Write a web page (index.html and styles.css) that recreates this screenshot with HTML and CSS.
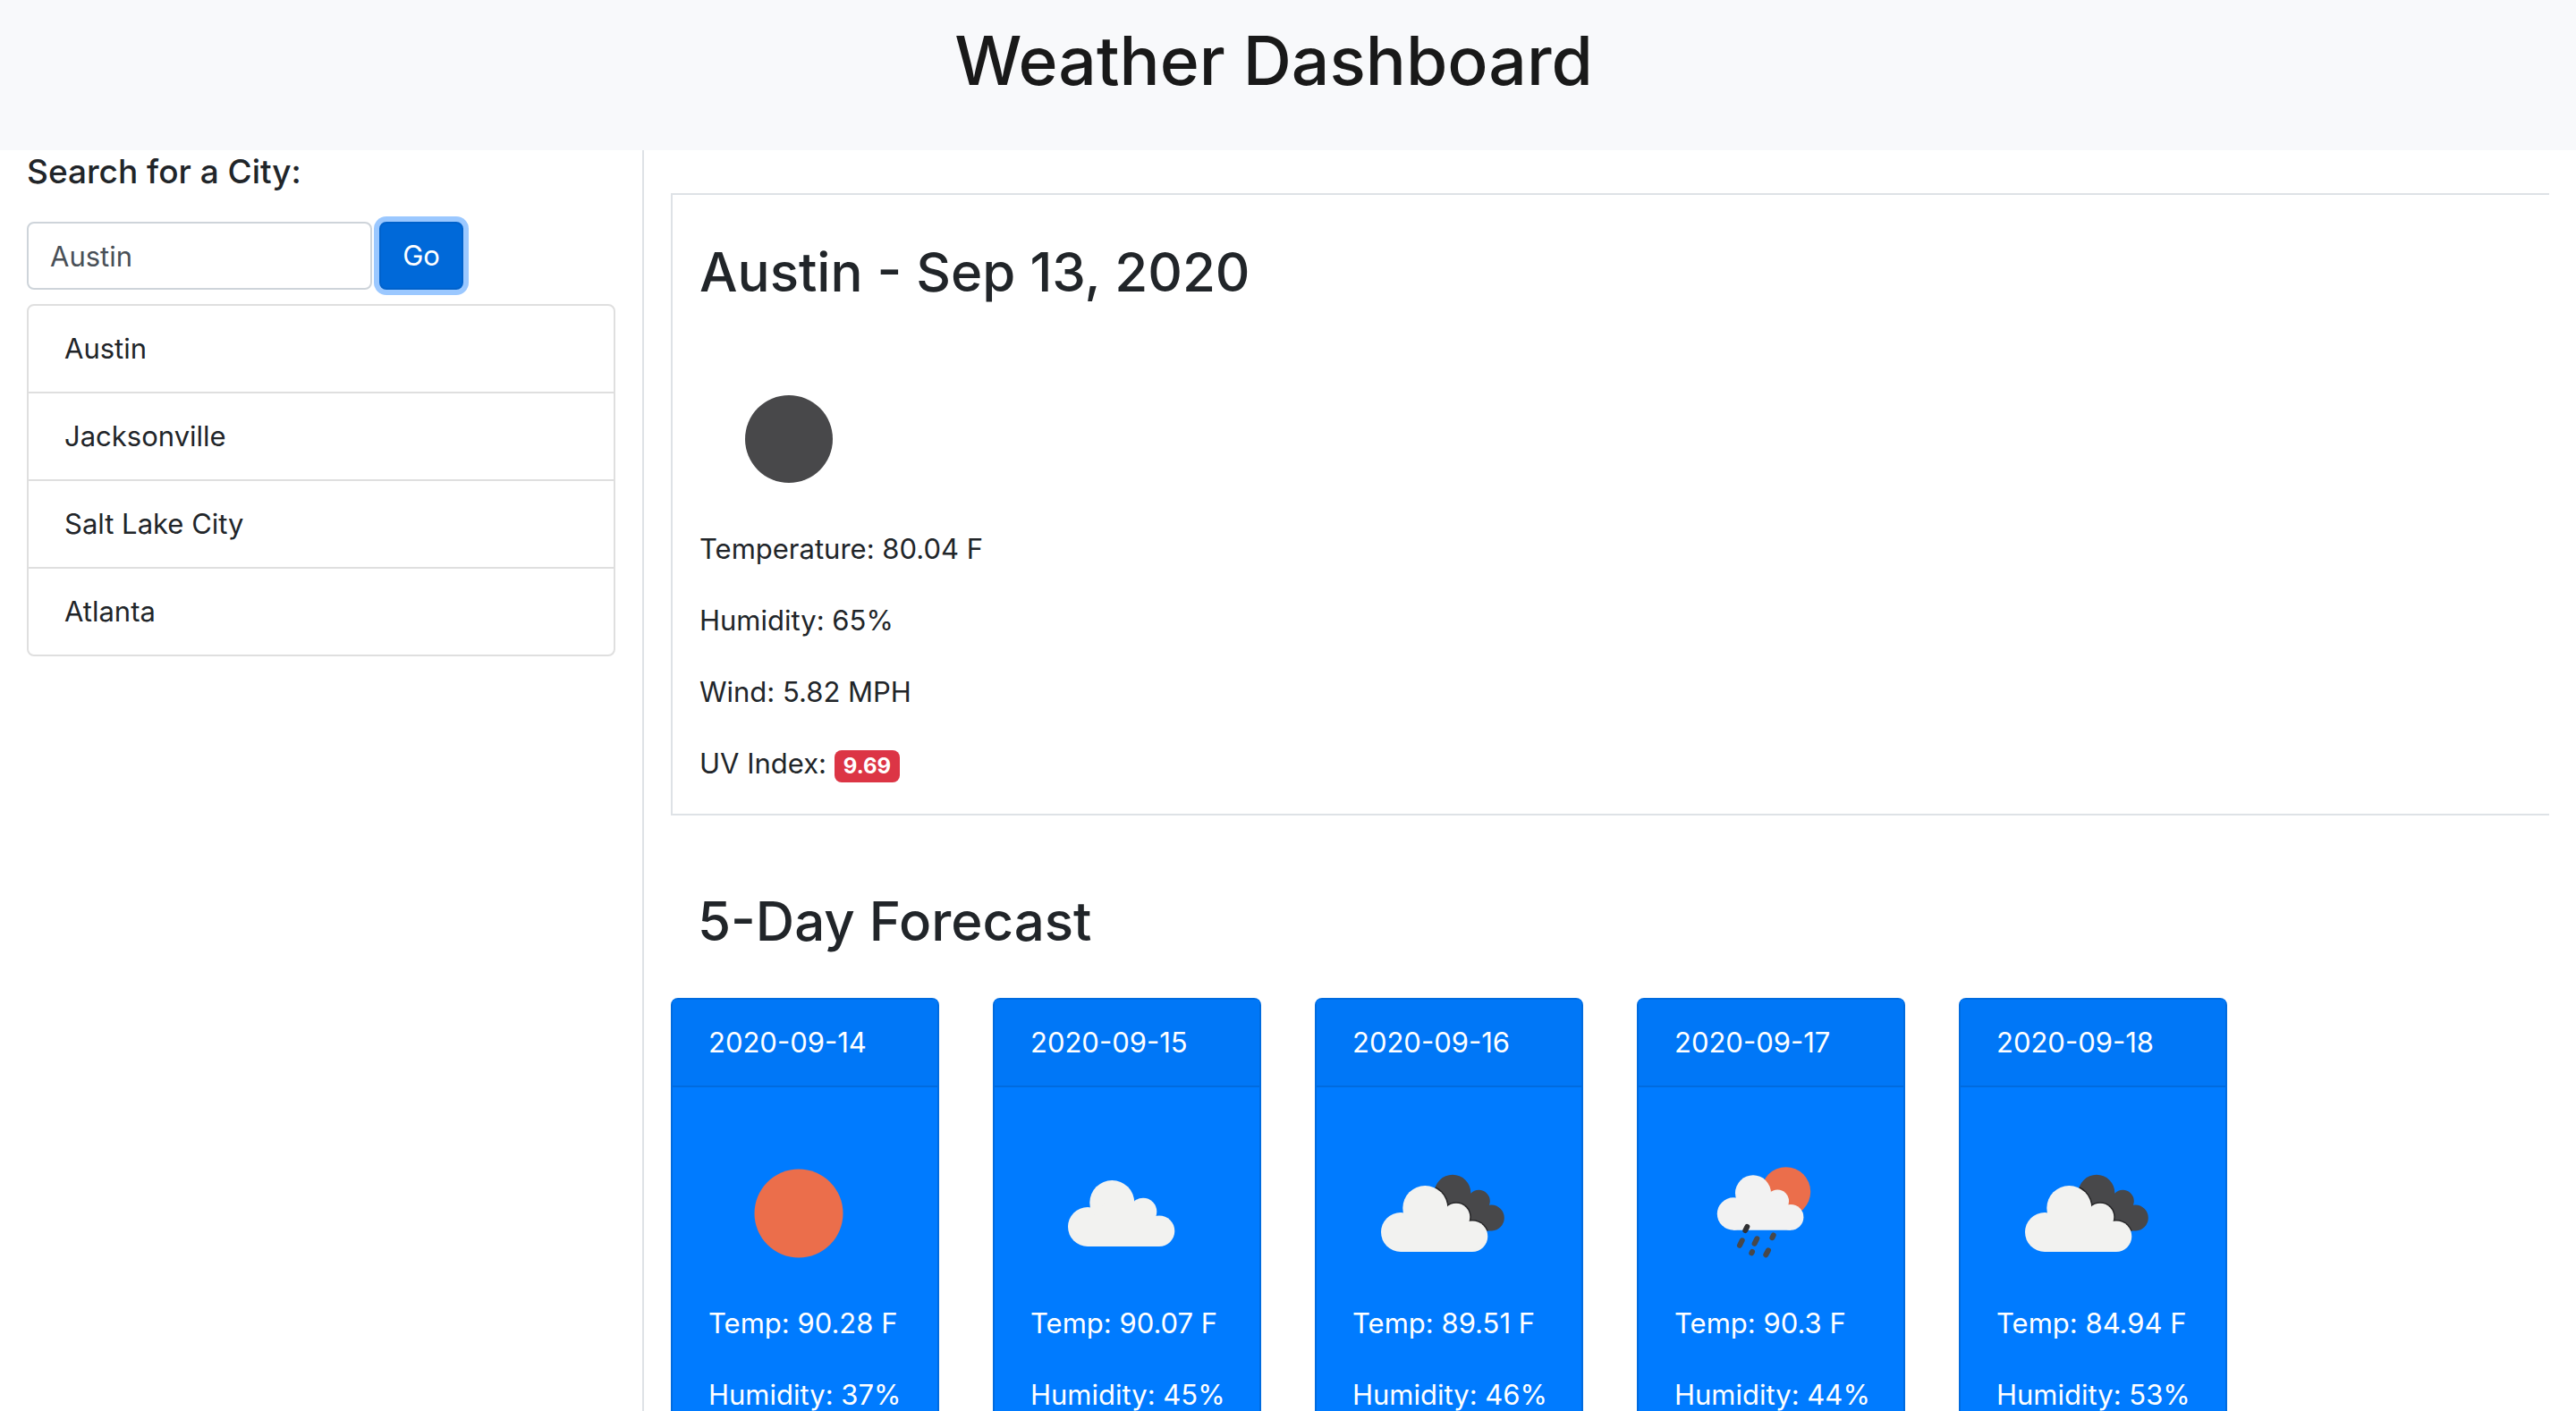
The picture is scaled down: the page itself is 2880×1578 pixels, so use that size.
FILE: index.html
```html
<!DOCTYPE html>
<html lang="en">
<head>
  <meta charset="utf-8">
  <meta name="viewport" content="width=device-width, initial-scale=1">
  <title>Weather Dashboard</title>
  <link rel="stylesheet" href="styles.css">
</head>
<body>
  <svg class="symbols" aria-hidden="true">
    <defs>
      <symbol id="cloud" viewBox="0 0 200 200">
        <circle cx="54" cy="122" r="22"/>
        <circle cx="81.3" cy="95" r="25"/>
        <circle cx="116" cy="105" r="15.3"/>
        <circle cx="134" cy="126.7" r="17.3"/>
        <path d="M54 144h80l6-18-14-20-20-8-30-6-18 20z"/>
      </symbol>
      <clipPath id="back-cloud">
        <circle cx="112" cy="78" r="20.3"/>
        <circle cx="141.3" cy="87.3" r="12.5"/>
        <circle cx="155.3" cy="106" r="14.5"/>
        <path d="M96 90l30-12 18 6 12 20v16.500h-30z"/>
      </clipPath>
      <symbol id="broken-clouds" viewBox="0 0 200 200">
        <g clip-path="url(#back-cloud)">
          <rect width="200" height="200" fill="#48484a"/>
          <use href="#cloud" width="200" height="200" fill="#262628" stroke="#262628" stroke-width="3"/>
        </g>
        <use href="#cloud" width="200" height="200" fill="#f2f2f0"/>
      </symbol>
    </defs>
  </svg>

  <header class="navbar">
    <h1 class="brand">Weather Dashboard</h1>
  </header>

  <div class="layout">
    <aside class="sidebar">
      <form class="search">
        <label class="search-title" for="city">Search for a City:</label>
        <div class="search-row">
          <input class="search-input" id="city" type="text" placeholder="Austin">
          <button class="search-button" type="button">Go</button>
        </div>
      </form>
      <ul class="history">
        <li class="history-item">Austin</li>
        <li class="history-item">Jacksonville</li>
        <li class="history-item">Salt Lake City</li>
        <li class="history-item">Atlanta</li>
      </ul>
    </aside>

    <main class="content">
      <section class="current">
        <h2 class="heading">Austin - Sep 13, 2020</h2>
        <svg class="icon" viewBox="0 0 200 200" role="img" aria-label="Clear night"><circle cx="100" cy="101" r="49" fill="#48484a"/></svg>
        <p class="reading">Temperature: 80.04 F</p>
        <p class="reading">Humidity: 65%</p>
        <p class="reading">Wind: 5.82 MPH</p>
        <p class="reading">UV Index: <span class="badge">9.69</span></p>
      </section>

      <section class="forecast">
        <h2 class="heading forecast-heading">5-Day Forecast</h2>
        <div class="cards">
          <article class="card">
            <div class="card-header">2020-09-14</div>
            <div class="card-body">
              <svg class="icon" viewBox="0 0 200 200" role="img" aria-label="Clear"><circle cx="101" cy="101" r="49.500" fill="#eb6e4b"/></svg>
              <p class="reading">Temp: 90.28 F</p>
              <p class="reading">Humidity: 37%</p>
            </div>
          </article>
          <article class="card">
            <div class="card-header">2020-09-15</div>
            <div class="card-body">
              <svg class="icon" viewBox="-10 6 200 200" role="img" aria-label="Cloudy"><use href="#cloud" width="200" height="200" fill="#f2f2f0"/></svg>
              <p class="reading">Temp: 90.07 F</p>
              <p class="reading">Humidity: 45%</p>
            </div>
          </article>
          <article class="card">
            <div class="card-header">2020-09-16</div>
            <div class="card-body">
              <svg class="icon" viewBox="0 0 200 200" role="img" aria-label="Broken clouds"><use href="#broken-clouds" width="200" height="200"/></svg>
              <p class="reading">Temp: 89.51 F</p>
              <p class="reading">Humidity: 46%</p>
            </div>
          </article>
          <article class="card">
            <div class="card-header">2020-09-17</div>
            <div class="card-body">
              <svg class="icon" viewBox="0 0 200 200" role="img" aria-label="Rain">
                <circle cx="124.700" cy="76.700" r="27.500" fill="#eb6e4b"/>
                <g fill="#f2f2f2">
                  <circle cx="66" cy="101.500" r="18.200"/>
                  <circle cx="88" cy="78.300" r="20"/>
                  <circle cx="115.300" cy="87.300" r="12.700"/>
                  <circle cx="130" cy="105.300" r="14.400"/>
                  <path d="M66 119.700h64l5-14-12-18-14-5-26-6-14 16z"/>
                </g>
                <path d="M81.300 116l-2 4" stroke="#303032" stroke-width="6" stroke-linecap="round"/>
                <path d="M75.700 131.300l-2.700 5.500M92.300 129.300l-2.700 5.500M110.700 125.500l-1.300 2.700M87 144l-.7 1.300M105 142.300l-2.700 5" stroke="#48484a" stroke-width="6" stroke-linecap="round"/>
              </svg>
              <p class="reading">Temp: 90.3 F</p>
              <p class="reading">Humidity: 44%</p>
            </div>
          </article>
          <article class="card">
            <div class="card-header">2020-09-18</div>
            <div class="card-body">
              <svg class="icon" viewBox="0 0 200 200" role="img" aria-label="Broken clouds"><use href="#broken-clouds" width="200" height="200"/></svg>
              <p class="reading">Temp: 84.94 F</p>
              <p class="reading">Humidity: 53%</p>
            </div>
          </article>
        </div>
      </section>
    </main>
  </div>
</body>
</html>
```

FILE: styles.css
```css
*,
*::before,
*::after {
  box-sizing: border-box;
}

html {
  scrollbar-width: none;
}

body {
  margin: 0;
  background: #fff;
  color: #212529;
  font-family: Inter, "Liberation Sans", sans-serif;
  font-size: 31px;
  line-height: 48px;
}

.symbols {
  display: block;
  width: 0;
  height: 0;
}

.navbar {
  padding: 20px 16px 52px;
  background: #f8f9fb;
  text-align: center;
}

.brand {
  margin: 0 32px 0 0;
  color: #191919;
  font-size: 75px;
  font-weight: 500;
  line-height: 96px;
}

.layout {
  display: grid;
  grid-template-columns: 1fr 3fr;
}

.sidebar {
  padding: 0 30px;
  border-right: 2px solid #dee2e6;
}

.search-title {
  display: block;
  margin-bottom: 32px;
  font-size: 37px;
  font-weight: 500;
  line-height: 48px;
}

.search-row {
  display: flex;
  gap: 8px;
  margin-bottom: 16px;
}

.search-input {
  width: 386px;
  height: 76px;
  padding: 12px 24px;
  border: 2px solid #ced4da;
  border-radius: 8px;
  background: #fff;
  color: #495057;
  font: inherit;
}

.search-input::placeholder {
  color: #495057;
  opacity: 1;
}

.search-button {
  width: 94px;
  height: 76px;
  padding: 0;
  border: 2px solid #0062cc;
  border-radius: 8px;
  background: #0069d9;
  box-shadow: 0 0 0 6px #9bc8ff;
  color: #fff;
  font: inherit;
}

.history {
  margin: 0;
  padding: 0;
  border: 2px solid #dfdfdf;
  border-radius: 8px;
  list-style: none;
}

.history-item {
  padding: 24px 40px;
}

.history-item + .history-item {
  border-top: 2px solid #dfdfdf;
}

.content {
  padding: 48px 30px;
}

.current {
  margin-bottom: 80px;
  padding: 48px 30px 0;
  border: 2px solid #dee2e6;
  border-right: 0;
}

.heading {
  margin: 0;
  font-size: 60px;
  font-weight: 500;
  line-height: 76px;
}

.current .heading {
  margin-bottom: 48px;
}

.icon {
  display: block;
  width: 200px;
  height: 200px;
}

.reading {
  margin: 0 0 32px;
}

.badge {
  display: inline-block;
  padding: 6px 10px;
  border-radius: 8px;
  background: #dc3545;
  color: #fff;
  font-size: 24px;
  font-weight: 700;
  line-height: 24px;
}

.forecast-heading {
  margin-bottom: 48px;
  padding-left: 30px;
}

.cards {
  display: grid;
  grid-template-columns: repeat(6, minmax(0, 1fr));
  gap: 60px;
}

.card {
  border: 2px solid #006bdf;
  border-radius: 8px;
  background: #007bff;
  color: #fff;
}

.card-header {
  padding: 24px 40px;
  border-bottom: 2px solid #006bdf;
  background: #0077f7;
  white-space: nowrap;
}

.card-body {
  padding: 40px;
  white-space: nowrap;
}
```
